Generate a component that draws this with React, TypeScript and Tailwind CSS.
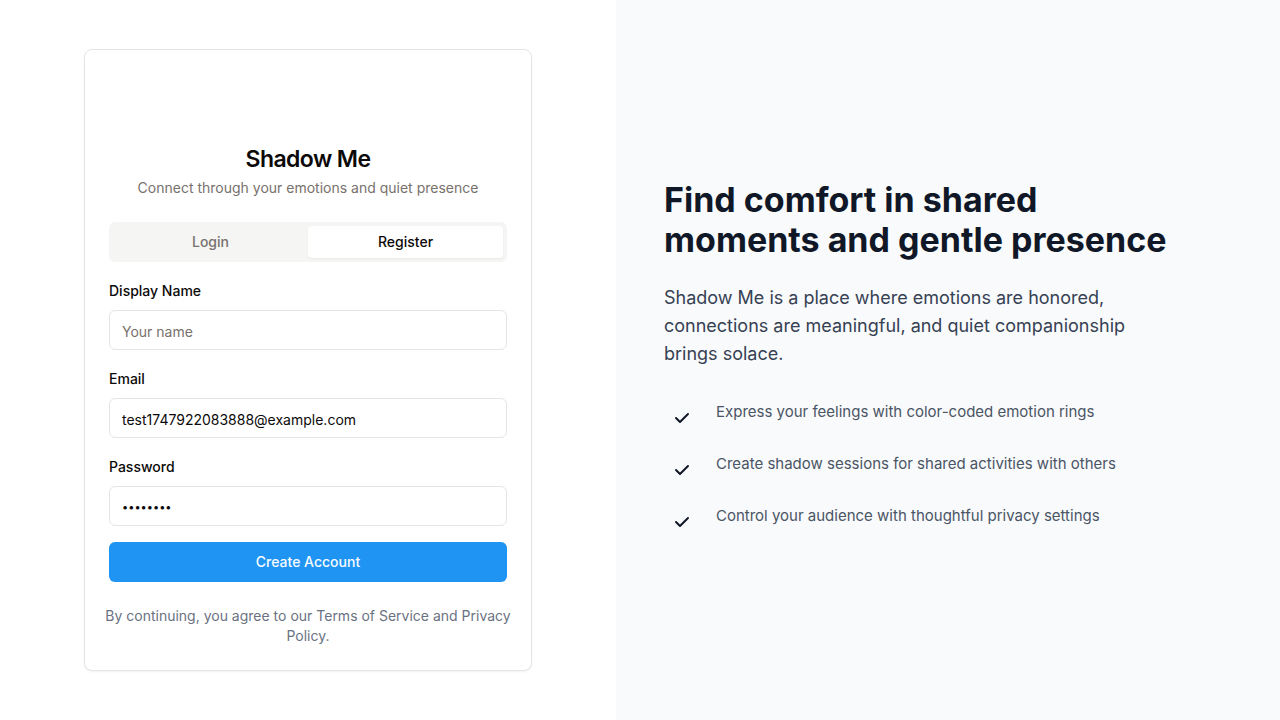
import { useState } from "react";

const tabs = ["Login", "Register"];

const fields = [
  { id: "name", label: "Display Name", type: "text", placeholder: "Your name", value: "", size: "text-sm" },
  { id: "email", label: "Email", type: "email", placeholder: "", value: "test1747922083888@example.com", size: "text-sm" },
  { id: "password", label: "Password", type: "password", placeholder: "", value: "password", size: "text-[11px]" },
];

const features = [
  "Express your feelings with color-coded emotion rings",
  "Create shadow sessions for shared activities with others",
  "Control your audience with thoughtful privacy settings",
];

function CheckIcon() {
  return (
    <svg className="h-5 w-5" viewBox="0 0 20 20" fill="currentColor" aria-hidden="true">
      <path
        fillRule="evenodd"
        clipRule="evenodd"
        d="M16.707 5.293a1 1 0 010 1.414l-8 8a1 1 0 01-1.414 0l-4-4a1 1 0 011.414-1.414L8 12.586l7.293-7.293a1 1 0 011.414 0z"
      />
    </svg>
  );
}

export default function App() {
  const [active, setActive] = useState("Register");
  return (
    <div className="flex min-h-screen bg-white font-['Inter',sans-serif] text-stone-950">
      <main className="flex flex-1 items-center justify-center p-6">
        <section className="w-full max-w-md rounded-lg border border-[#e5e5e5] bg-white px-6 pt-[97px] pb-6 shadow-xs">
          <header className="text-center">
            <h1 className="text-[23px] leading-6 font-semibold tracking-tight">Shadow Me</h1>
            <p className="mt-[7px] text-sm text-[#78716c]">Connect through your emotions and quiet presence</p>
          </header>
          <div role="tablist" className="mt-6 grid h-10 grid-cols-2 rounded-md bg-[#f5f5f4] p-1">
            {tabs.map((tab) => (
              <button
                key={tab}
                type="button"
                role="tab"
                aria-selected={active === tab}
                onClick={() => setActive(tab)}
                className={`rounded-sm text-sm font-medium ${active === tab ? "bg-white text-stone-950 shadow-xs" : "text-[#78716c]"}`}
              >
                {tab}
              </button>
            ))}
          </div>
          <form className="mt-[18px]" onSubmit={(e) => e.preventDefault()}>
            <div className="space-y-[18px]">
              {fields.map((f) => (
                <div key={f.id} className="space-y-2">
                  <label htmlFor={f.id} className="block text-sm leading-[22px] font-medium">
                    {f.label}
                  </label>
                  <input
                    id={f.id}
                    type={f.type}
                    placeholder={f.placeholder}
                    defaultValue={f.value}
                    className={`block h-10 w-full rounded-md border border-[#e5e5e5] bg-white px-3 pt-2.5 pb-2 placeholder:text-[#78716c] ${f.size}`}
                  />
                </div>
              ))}
            </div>
            <button type="submit" className="mt-4 h-10 w-full rounded-md bg-[#2094f3] text-sm font-medium text-[#f7fbfe]">
              Create Account
            </button>
          </form>
          <p className="-mx-2 mt-6 text-center text-sm text-gray-500">
            By continuing, you agree to our Terms of Service and Privacy Policy.
          </p>
        </section>
      </main>
      <aside className="flex flex-1 items-center bg-gray-50 p-12">
        <div className="max-w-lg">
          <h2 className="text-[34px] leading-10 font-bold text-gray-900">
            Find comfort in shared moments and gentle presence
          </h2>
          <p className="mt-6 pr-2 text-lg leading-7 text-gray-700">
            Shadow Me is a place where emotions are honored, connections are meaningful, and quiet companionship brings solace.
          </p>
          <ul className="mt-8 space-y-4">
            {features.map((text) => (
              <li key={text} className="flex items-start">
                <span className="mr-4 rounded-full p-2 text-gray-900">
                  <CheckIcon />
                </span>
                <span className="text-[15px] leading-6 text-gray-600">{text}</span>
              </li>
            ))}
          </ul>
        </div>
      </aside>
    </div>
  );
}
